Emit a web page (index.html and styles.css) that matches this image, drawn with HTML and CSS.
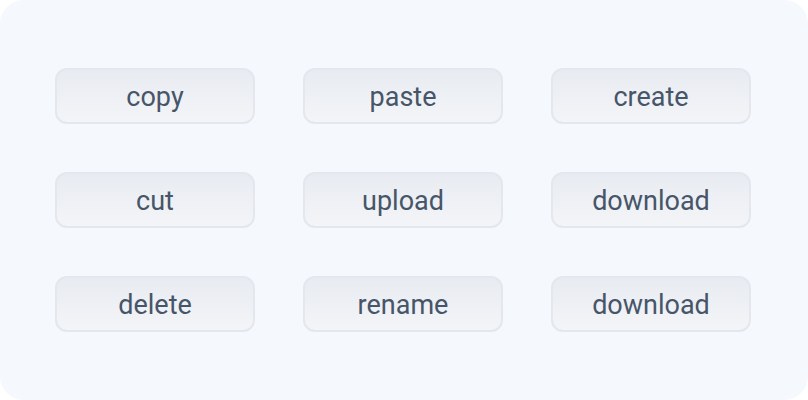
FILE: index.html
```html
<!DOCTYPE html>
<html lang="en">
<head>
  <meta charset="UTF-8" />
  <meta name="viewport" content="width=device-width, initial-scale=1.0" />
  <title>File actions</title>
  <link rel="stylesheet" href="styles.css">
</head>
<body>
  <div class="panel">
    <div class="grid">
      <button class="btn">copy</button>
      <button class="btn">paste</button>
      <button class="btn">create</button>
      <button class="btn">cut</button>
      <button class="btn">upload</button>
      <button class="btn">download</button>
      <button class="btn">delete</button>
      <button class="btn">rename</button>
      <button class="btn">download</button>
    </div>
  </div>
</body>
</html>
```

FILE: styles.css
```css
* { margin: 0; padding: 0; box-sizing: border-box; font-family: Roboto, sans-serif; }
body {
  background: #ffffff;
  width: 808px;
  height: 400px;
}
.panel {
  width: 808px;
  height: 400px;
  background: #f5f8fc;
  border-radius: 24px;
  padding: 68px 57px 69px 55px;
}
.grid {
  display: grid;
  grid-template-columns: repeat(3, 200px);
  grid-auto-rows: 56px;
  column-gap: 48px;
  row-gap: 48px;
}
.btn {
  border: 2px solid #e3e7ee;
  border-radius: 12px;
  background: linear-gradient(to bottom, #e8ebf1, #f3f5f8);
  color: #475569;
  font-size: 27px;
  padding-top: 1px;
  cursor: pointer;
}
```
